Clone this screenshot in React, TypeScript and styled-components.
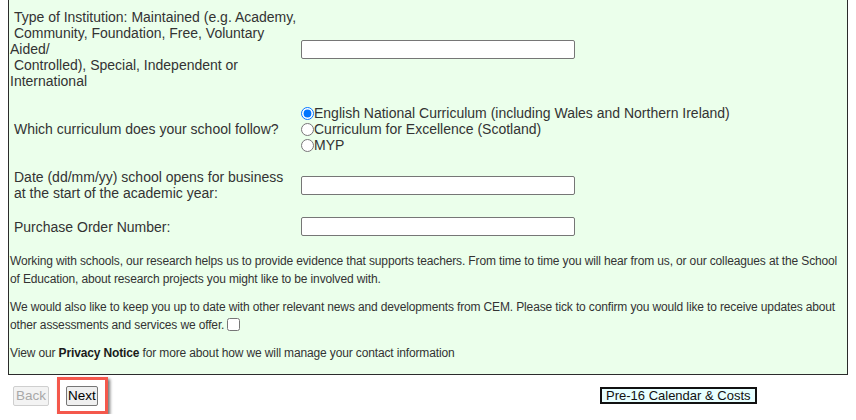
import React from "react";
import styled, { createGlobalStyle } from "styled-components";

const GlobalStyle = createGlobalStyle`
  body {
    margin: 0 8px;
    background: #ffffff;
    font-family: "Liberation Sans", Arial, sans-serif;
    color: #333333;
  }
`;

const Panel = styled.div`
  background-color: #ebffeb;
  border: 1px solid #2b2b2b;
  border-top: none;
  padding: 9px 1px 0 1px;
`;

const FormGrid = styled.div`
  display: grid;
  grid-template-columns: 291px 1fr;
  row-gap: 16px;
  align-items: center;
  font-size: 14px;
  line-height: 16px;
`;

const Label = styled.div<{ $indent?: boolean }>`
  padding-left: ${(p) => (p.$indent ? "4px" : "0")};
`;

const TextInput = styled.input`
  box-sizing: border-box;
  width: 274px;
  height: 19px;
  border: 1px solid #767676;
  border-radius: 2px;
  background: #ffffff;
  margin: 0;
`;

const RadioList = styled.div`
  display: flex;
  flex-direction: column;
`;

const RadioOption = styled.label`
  display: flex;
  align-items: center;
  height: 16px;

  input {
    margin: 0;
    width: 13px;
    height: 13px;
  }
`;

const Notes = styled.div`
  display: flex;
  flex-direction: column;
  gap: 10px;
  padding: 16px 0 12px 0;
  font-size: 12px;
  line-height: 18px;
  letter-spacing: -0.14px;

  p {
    margin: 0;
  }

  b {
    color: #1a1a1a;
  }

  input[type="checkbox"] {
    margin: 0 0 0 3px;
    width: 13px;
    height: 13px;
    vertical-align: -2px;
  }
`;

const Footer = styled.div`
  display: grid;
  grid-template-columns: 592px auto;
  align-items: center;
  padding-top: 2px;
`;

const NavButtons = styled.div`
  display: flex;
  align-items: center;
  gap: 8px;
  padding-left: 5px;
`;

const NavButton = styled.button<{ $tight?: boolean }>`
  font-family: "Liberation Sans", Arial, sans-serif;
  font-size: 13.5px;
  line-height: 16px;
  height: 20px;
  padding: ${(p) => (p.$tight ? "0 1px" : "0 2px")};
  border: 1px solid #767676;
  border-radius: 2px;
  background: #efefef;
  color: #000000;

  &:disabled {
    color: #a8a8a8;
    border-color: #cfcfcf;
    background: #f3f3f3;
  }
`;

const Highlight = styled.div`
  border: 3px solid #f4584c;
  padding: 6px 7px 5px 6px;
  box-shadow: 2px 2px 3px rgba(0, 0, 0, 0.55);
`;

const CalendarButton = styled.button`
  font-family: "Liberation Sans", Arial, sans-serif;
  font-size: 13px;
  line-height: 13px;
  height: 17px;
  padding: 0 4px;
  border: 2px solid #111111;
  background: #e8ffff;
  color: #111111;
  justify-self: start;
`;

export default function App() {
  return (
    <>
      <GlobalStyle />
      <Panel>
        <FormGrid>
          <Label>
            &nbsp;Type of Institution: Maintained (e.g. Academy,
            <br />
            &nbsp;Community, Foundation, Free, Voluntary
            <br />
            Aided/
            <br />
            &nbsp;Controlled), Special, Independent or
            <br />
            International
          </Label>
          <div>
            <TextInput type="text" />
          </div>

          <Label $indent>Which curriculum does your school follow?</Label>
          <RadioList>
            <RadioOption>
              <input type="radio" name="curriculum" defaultChecked />
              English National Curriculum (including Wales and Northern Ireland)
            </RadioOption>
            <RadioOption>
              <input type="radio" name="curriculum" />
              Curriculum for Excellence (Scotland)
            </RadioOption>
            <RadioOption>
              <input type="radio" name="curriculum" />
              MYP
            </RadioOption>
          </RadioList>

          <Label $indent>
            Date (dd/mm/yy) school opens for business
            <br />
            at the start of the academic year:
          </Label>
          <div>
            <TextInput type="text" />
          </div>

          <Label $indent>Purchase Order Number:</Label>
          <div>
            <TextInput type="text" />
          </div>
        </FormGrid>

        <Notes>
          <p>
            Working with schools, our research helps us to provide evidence that supports teachers. From time to time
            you will hear from us, or our colleagues at the School of Education, about research projects you might like
            to be involved with.
          </p>
          <p>
            We would also like to keep you up to date with other relevant news and developments from CEM. Please tick to
            confirm you would like to receive updates about other assessments and services we offer.
            <input type="checkbox" />
          </p>
          <p>
            View our <b>Privacy Notice</b> for more about how we will manage your contact information
          </p>
        </Notes>
      </Panel>

      <Footer>
        <NavButtons>
          <NavButton disabled>Back</NavButton>
          <Highlight>
            <NavButton $tight>Next</NavButton>
          </Highlight>
        </NavButtons>
        <CalendarButton>Pre-16 Calendar &amp; Costs</CalendarButton>
      </Footer>
    </>
  );
}
